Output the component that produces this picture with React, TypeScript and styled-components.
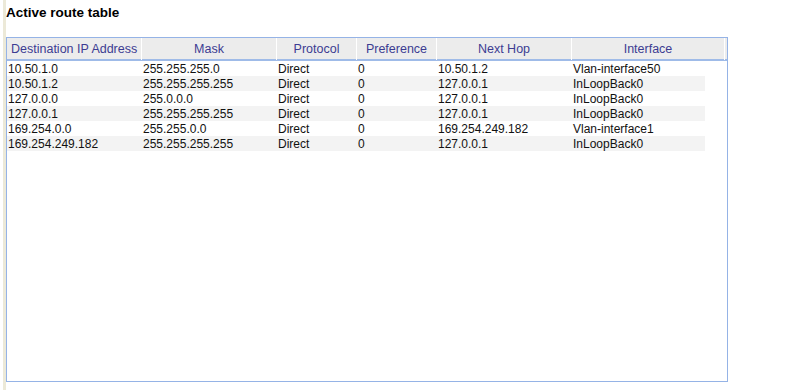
import styled, { createGlobalStyle } from 'styled-components'

const GlobalStyle = createGlobalStyle`
  body {
    margin: 0;
    background: #ffffff;
    font-family: "Liberation Sans", Arial, sans-serif;
  }
`;

const Page = styled.div`
  display: flex;
  height: 390px;
  padding-left: 3px;
  background: #ffffff;
`;

const Rail = styled.div`
  width: 3px;
  background: #ece9d8;
`;

const Content = styled.div`
  flex: 1;
  display: flex;
  flex-direction: column;
`;

const Title = styled.h1`
  margin: 0;
  padding: 5px 0 0 0;
  height: 37px;
  box-sizing: border-box;
  font-size: 13.5px;
  font-weight: bold;
  color : #000000;
  line-height: 16px;
`;

const Box = styled.div`
  width: 722px;
  height: 345px;
  box-sizing: border-box;
  border: 1px solid #95b3e6;
`;

const columns = '135px 135px 80px 80px 135px';

const HeadRow = styled.div`
  display: grid;
  grid-template-columns: ${columns} 153px;
  height: 21px;
  background: #ececec;
  border-bottom: 2px solid #9fbbe8;
`;

const HeadCell = styled.div<{ $left?: boolean }>`
  border-right: 1px solid #ffffff;
  font-size: 12.5px;
  line-height: 22px;
  color: #3c3c92;
  text-align: ${props => props.$left ? 'left' : 'center'};
  padding-left: ${props => props.$left ? '4px' : '0'};
  white-space: nowrap;
`;

const Row = styled.div<{ $striped: boolean }>`
  display: grid;
  grid-template-columns: ${columns} 133px;
  height: 15px;
  background: ${props => props.$striped ? '#f3f3f3' : '#ffffff'};
  width: 698px;
`;

const Cell = styled.div`
  font-size: 12px;
  line-height: 16px;
  color: #111111;
  padding-left: 1px;
  white-space: nowrap;
`;

interface Route {
  dest: string,
  mask: string,
  protocol: string,
  preference: string,
  nextHop: string,
  iface: string,
}

const routes: Route[] = [
  { dest: '10.50.1.0', mask: '255.255.255.0', protocol: 'Direct', preference: '0', nextHop: '10.50.1.2', iface: 'Vlan-interface50' },
  { dest: '10.50.1.2', mask: '255.255.255.255', protocol: 'Direct', preference: '0', nextHop: '127.0.0.1', iface: 'InLoopBack0' },
  { dest: '127.0.0.0', mask: '255.0.0.0', protocol: 'Direct', preference: '0', nextHop: '127.0.0.1', iface: 'InLoopBack0' },
  { dest: '127.0.0.1', mask: '255.255.255.255', protocol: 'Direct', preference: '0', nextHop: '127.0.0.1', iface: 'InLoopBack0' },
  { dest: '169.254.0.0', mask: '255.255.0.0', protocol: 'Direct', preference: '0', nextHop: '169.254.249.182', iface: 'Vlan-interface1' },
  { dest: '169.254.249.182', mask: '255.255.255.255', protocol: 'Direct', preference: '0', nextHop: '127.0.0.1', iface: 'InLoopBack0' },
];

export default function App() {
  return (
    <>
      <GlobalStyle />
      <Page>
        <Rail />
        <Content>
          <Title>Active route table</Title>
          <Box>
            <HeadRow>
              <HeadCell $left>Destination IP Address</HeadCell>
              <HeadCell>Mask</HeadCell>
              <HeadCell>Protocol</HeadCell>
              <HeadCell>Preference</HeadCell>
              <HeadCell>Next Hop</HeadCell>
              <HeadCell>Interface</HeadCell>
            </HeadRow>
            {routes.map((r, i) => (
              <Row key={r.dest} $striped={i % 2 === 1}>
                <Cell>{r.dest}</Cell>
                <Cell>{r.mask}</Cell>
                <Cell>{r.protocol}</Cell>
                <Cell>{r.preference}</Cell>
                <Cell>{r.nextHop}</Cell>
                <Cell>{r.iface}</Cell>
              </Row>
            ))}
          </Box>
        </Content>
      </Page>
    </>
  )
}
